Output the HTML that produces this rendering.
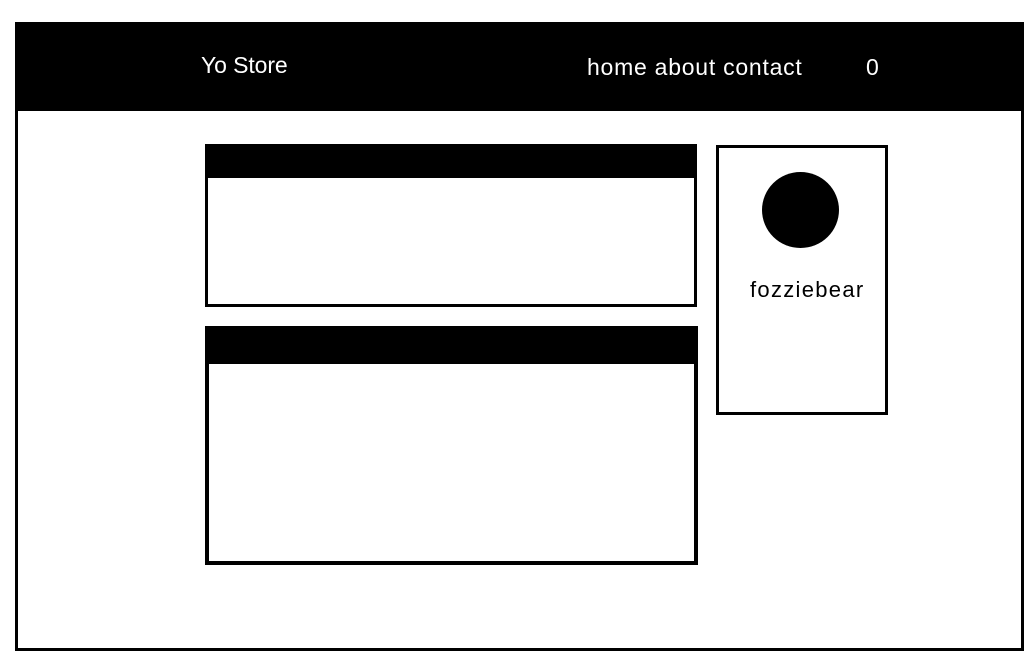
<!DOCTYPE html>
<html><head><style>
body{margin:0;width:1032px;height:667px;background:#fff;position:relative;overflow:hidden;font-family:"Liberation Sans",Helvetica,Arial,sans-serif;}
.a{position:absolute;box-sizing:border-box;}
.t{position:absolute;color:#fff;font-size:23px;line-height:26px;white-space:nowrap;}
</style></head><body>
<div class="a" style="left:15px;top:22px;width:1009px;height:629px;border:3px solid #000;border-top:none;"></div>
<div class="a" style="left:15px;top:22px;width:1009px;height:89px;background:#000;"></div>
<div class="t" style="left:201px;top:52px;letter-spacing:-0.1px;">Yo Store</div>
<div class="t" style="left:587px;top:54px;letter-spacing:0.75px;">home about contact</div>
<div class="t" style="left:866px;top:54px;">0</div>
<div class="a" style="left:205px;top:144px;width:492px;height:163px;border:3px solid #000;border-top:34px solid #000;"></div>
<div class="a" style="left:205px;top:326px;width:493px;height:239px;border:4px solid #000;border-top:38px solid #000;"></div>
<div class="a" style="left:716px;top:145px;width:172px;height:270px;border:3px solid #000;"></div>
<div class="a" style="left:762px;top:172px;width:77px;height:76px;border-radius:50%;background:#000;"></div>
<div class="a" style="left:750px;top:277px;font-size:22px;line-height:25px;color:#000;letter-spacing:1.3px;white-space:nowrap;">fozziebear</div>
</body></html>
